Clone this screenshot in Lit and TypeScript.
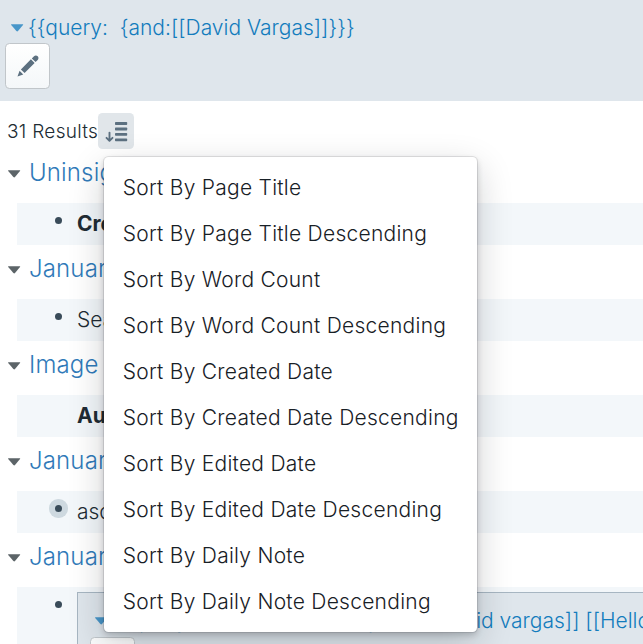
import { LitElement, html, css, svg } from "lit";
import { customElement, property } from "lit/decorators.js";

const caret = svg`<path d="M0.5 0.2H11.8Q12.6 0.2 12 1L7 7Q6.2 7.8 5.4 7L0.2 1Q-0.4 0.2 0.5 0.2Z" fill="currentColor"/>`;

const pencil = html`<svg width="24" height="24" viewBox="0 0 16 16" fill="#5c7080">
  <path d="M3.25 10.26l2.47 2.47 6.69-6.69-2.46-2.48-6.7 6.7zM.99 14.99l3.86-1.39-2.46-2.44L.99 15zm12.25-14c-.48 0-.92.2-1.24.51l-1.44 1.44 2.47 2.47 1.44-1.44c.32-.32.51-.75.51-1.24.01-.95-.77-1.74-1.74-1.74z"/>
</svg>`;

const sortDesc = html`<svg width="24" height="24" viewBox="0 0 24 24" fill="#5c7080">
  <rect x="11" y="3" width="12.2" height="2.9" rx=".7"/>
  <rect x="11" y="8.6" width="12.2" height="2.8" rx=".7"/>
  <rect x="11" y="14" width="12.2" height="2.8" rx=".7"/>
  <rect x="11" y="19.4" width="12.2" height="2.8" rx=".7"/>
  <path d="M5.5 13.6V21M2.5 18.8L5.5 21.8L8.5 18.8" fill="none" stroke="#5c7080" stroke-width="1.9" stroke-linecap="round" stroke-linejoin="round"/>
</svg>`;

@customElement("sort-menu")
export class SortMenu extends LitElement {
  static styles = css`
    :host { display: block; width: 358px; padding: 7.5px; background: #fff; border-radius: 4.5px;
      box-shadow: 0 0 0 1px rgba(16,22,26,.1), 0 3px 6px rgba(16,22,26,.2), 0 12px 36px rgba(16,22,26,.2); }
    .item { height: 46px; line-height: 46px; padding-left: 11.2px; font-size: 21px; color: #182026; letter-spacing: .26px; white-space: nowrap; }
  `;
  render() {
    const fields = ["Page Title", "Word Count", "Created Date", "Edited Date", "Daily Note"];
    return fields.map((f) => html`<div class="item">Sort By ${f}</div><div class="item">Sort By ${f} Descending</div>`);
  }
}

@customElement("result-group")
export class ResultGroup extends LitElement {
  @property() heading = "";
  @property() text = "";
  @property() bullet = "open";
  @property({ type: Boolean }) strong = false;
  @property({ type: Boolean }) nested = false;
  static styles = css`
    :host { display: block; }
    .head { display: flex; align-items: flex-start; height: 54px; padding-left: 8px; color: #5c6468; }
    .caret { width: 12px; height: 7px; flex: none; overflow: visible; }
    .head .caret { margin-top: 21px; }
    .title { margin-left: 9px; font-size: 24px; line-height: 48px; height: 54px; color: #307ab9; white-space: nowrap; letter-spacing: .15px; }
    .row { display: flex; margin-left: 17px; height: 42px; background: #f3f7fa; line-height: 41px; font-size: 21px; color: #202b33; }
    .row.tall { height: 90px; }
    .gutter { width: 60px; flex: none; display: flex; justify-content: flex-end; }
    .dot { width: 7px; height: 7px; margin: 14px 15px 0 0; border-radius: 50%; background: #394b59; }
    .closed .dot { box-shadow: 0 0 0 6px #ced9e0; }
    .none .dot { visibility: hidden; }
    .strong { font-weight: 700; }
    .query { flex: 1; height: 90px; margin-top: 5px; border: 1px solid #a7b6c2; border-right: 0; background: #dfe6ec; box-sizing: border-box; min-width: 0; overflow: hidden; }
    .line { display: flex; align-items: center; height: 44px; padding: 10px 0 0 17px; box-sizing: border-box; color: #4896c9; }
    .code { margin-left: 7px; color: #137cbd; white-space: pre; }
    .edit { width: 43px; height: 43px; margin-left: 12px; border-radius: 4.5px; background: #fcfdfd; border: 1px solid #c2c8cc; }
  `;
  render() {
    return html`
      <div class="head"><svg class="caret" viewBox="0 0 12 7">${caret}</svg><div class="title">${this.heading}</div></div>
      <div class="row ${this.nested ? "tall" : ""}">
        <div class="gutter ${this.bullet}"><div class="dot"></div></div>
        ${this.nested
          ? html`<div class="query"><div class="line"><svg class="caret" viewBox="0 0 12 7">${caret}</svg><span class="code">${this.text}</span></div><div class="edit"></div></div>`
          : html`<div class=${this.strong ? "strong" : ""}>${this.text}</div>`}
      </div>`;
  }
}

@customElement("app-root")
export class AppRoot extends LitElement {
  static styles = css`
    :host { display: block; height: 644px; overflow: hidden; background: #fff; font-family: Inter, sans-serif; font-weight: 300; font-size: 21px; }
    .query { height: 101px; background: #dfe6ec; box-sizing: border-box; padding: 12px 0 0 5px; }
    .line { display: flex; align-items: center; height: 31px; padding-left: 6px; color: #4896c9; }
    .caret { width: 12px; height: 7px; overflow: visible; }
    .code { margin-left: 5px; color: #137cbd; white-space: pre; }
    .edit { display: flex; align-items: center; justify-content: center; width: 45px; height: 46px; border-radius: 4.5px; box-sizing: border-box; border: 1.5px solid #c1c6ca; background: linear-gradient(#fff, #f4f7f9); }
    .bar { display: flex; align-items: center; height: 48px; padding: 12px 0 0 7px; box-sizing: border-box; color: #202b33; font-size: 19px; }
    .count { width: 91px; letter-spacing: .3px; white-space: nowrap; }
    .sort { position: relative; width: 36px; height: 36px; border-radius: 4.5px; background: #e1e6ea; display: flex; align-items: center; justify-content: center; }
    .menu { position: absolute; z-index: 2; left: 6px; top: 44px; }
  `;
  render() {
    return html`
      <div class="query">
        <div class="line"><svg class="caret" viewBox="0 0 12 7">${caret}</svg><span class="code">{{query:  {and:[[David Vargas]]}}}</span></div>
        <div class="edit">${pencil}</div>
      </div>
      <div class="bar"><span class="count">31 Results</span><div class="sort">${sortDesc}<sort-menu class="menu"></sort-menu></div></div>
      <result-group heading="Uninsight" text="Create" strong></result-group>
      <result-group heading="January" text="Search"></result-group>
      <result-group heading="Image" text="Author" strong bullet="none"></result-group>
      <result-group heading="January" text="asd" bullet="closed"></result-group>
      <result-group heading="January" text="{{query:  {and:[[David Vargas]]  [[david vargas]] [[Hello]]}}}" nested></result-group>`;
  }
}
